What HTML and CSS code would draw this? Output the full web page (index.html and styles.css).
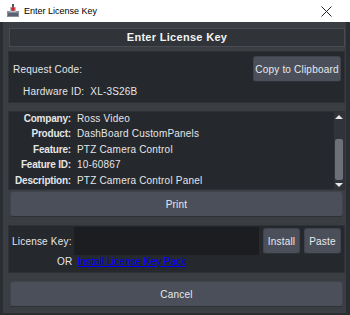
FILE: index.html
```html
<!DOCTYPE html>
<html lang="en">
<head>
    <meta charset="UTF-8">
    <title>Enter License Key</title>
    <link rel="stylesheet" href="styles.css">
</head>
<body>
    <div class="titlebar">
        <svg class="app-icon" width="14" height="14" viewBox="0 0 14 14">
            <rect x="1" y="7" width="12" height="6" fill="#8a8f99"/>
            <rect x="2" y="9" width="10" height="3" fill="#5c6270"/>
            <rect x="4" y="3" width="6" height="5" fill="#b9bec6"/>
            <circle cx="7" cy="5" r="2" fill="#d0262a"/>
            <rect x="6" y="0" width="2" height="3" fill="#555"/>
        </svg>
        <span class="title-text">Enter License Key</span>
        <svg class="close" width="11" height="11" viewBox="0 0 11 11">
            <path d="M0.5 0.5 L10.5 10.5 M10.5 0.5 L0.5 10.5" stroke="#222" stroke-width="1"/>
        </svg>
    </div>

    <div class="window">
        <div class="header">Enter License Key</div>

        <div class="panel request">
            <div class="row">
                <span>Request Code:</span>
                <button class="btn copy">Copy to Clipboard</button>
            </div>
            <div class="hw">Hardware ID:&nbsp; XL-3S26B</div>
        </div>

        <div class="panel info">
            <div class="info-grid">
                <span class="k">Company:</span><span>Ross Video</span>
                <span class="k">Product:</span><span>DashBoard CustomPanels</span>
                <span class="k">Feature:</span><span>PTZ Camera Control</span>
                <span class="k">Feature ID:</span><span>10-60867</span>
                <span class="k">Description:</span><span>PTZ Camera Control Panel</span>
            </div>
            <div class="scrollbar">
                <div class="arrow up"></div>
                <div class="track"><div class="thumb"></div></div>
                <div class="arrow down"></div>
            </div>
        </div>

        <button class="btn wide print">Print</button>

        <div class="panel key">
            <div class="key-row">
                <span class="key-label">License Key:</span>
                <div class="key-input"></div>
                <button class="btn small">Install</button>
                <button class="btn small">Paste</button>
            </div>
            <div class="or-row">
                <span class="or">OR</span>
                <a href="#" class="link">Install License Key Pack</a>
            </div>
        </div>

        <button class="btn wide cancel">Cancel</button>
    </div>
</body>
</html>
```

FILE: styles.css
```css
body {
    margin: 0;
    width: 350px;
    height: 315px;
    overflow: hidden;
    background: #ffffff;
    font-family: "Liberation Sans", Arial, sans-serif;
    font-size: 10px;
    letter-spacing: 0.2px;
    white-space: nowrap;
    color: #e4e6ea;
}
.titlebar {
    height: 22px;
    display: flex;
    align-items: center;
    background: #ffffff;
    color: #000;
    font-size: 9px;
    letter-spacing: 0;
    padding-left: 6px;
}
.app-icon {
    margin-right: 4px;
}
.title-text {
    flex: 1;
}
.close {
    margin-right: 18px;
}
.window {
    height: 293px;
    box-sizing: border-box;
    background: #3a3d42;
    border-left: 3px solid #2a2d31;
    border-right: 4px solid #2a2d31;
    border-bottom: 2px solid #2a2d31;
    padding: 6px 1px 0 5px;
    display: flex;
    flex-direction: column;
}
.header {
    height: 17px;
    margin-left: 1px;
    background: #303338;
    border: 1px solid #484b51;
    text-align: center;
    font-weight: bold;
    font-size: 11px;
    line-height: 17px;
    color: #f2f3f5;
    letter-spacing: 0.3px;
}
.panel {
    background: #25282c;
    border: 1px solid #2e3135;
}
.request {
    margin-top: 4px;
    height: 46px;
    padding: 4px 3px 0 4px;
}
.row {
    display: flex;
    justify-content: space-between;
    align-items: center;
}
.hw {
    margin-top: 4px;
    padding-left: 10px;
}
.btn {
    font-family: "Liberation Sans", Arial, sans-serif;
    font-size: 10px;
    letter-spacing: 0.2px;
    color: #e8eaee;
    background: #4a4f59;
    border: 1px solid #3f434b;
    border-bottom-color: #2e3136;
    border-radius: 3px;
    padding: 0;
    white-space: nowrap;
}
.copy {
    width: 88px;
    height: 26px;
}
.info {
    margin-top: 8px;
    height: 79px;
    box-sizing: border-box;
    display: flex;
    justify-content: space-between;
}
.info-grid {
    display: grid;
    grid-template-columns: auto auto;
    column-gap: 6px;
    row-gap: 3px;
    align-content: start;
    justify-content: start;
    padding: 1px 0 0 6px;
    line-height: 12.4px;
}
.k {
    text-align: right;
    font-weight: bold;
    letter-spacing: -0.2px;
}
.scrollbar {
    width: 10px;
    background: #30333a;
    display: flex;
    flex-direction: column;
    align-items: center;
    padding: 3px 0 2px;
}
.arrow {
    width: 0;
    height: 0;
    border-left: 4px solid transparent;
    border-right: 4px solid transparent;
}
.up {
    border-bottom: 4px solid #e8e8e8;
}
.down {
    border-top: 4px solid #e8e8e8;
}
.track {
    flex: 1;
    width: 8px;
    padding: 20px 0 3px;
    display: flex;
}
.thumb {
    flex: 1;
    background: #6c7079;
    border-radius: 2px;
}
.wide {
    height: 26px;
    margin-left: 2px;
    margin-right: 2px;
}
.print {
    margin-top: 1px;
}
.key {
    margin-top: 8px;
    height: 48px;
    box-sizing: border-box;
    padding: 1px 3px 0 3px;
}
.key-row {
    display: flex;
    align-items: center;
    gap: 4px;
}
.key-label {
    width: 58px;
}
.key-input {
    flex: 1;
    height: 28px;
    background: #1b1d20;
}
.small {
    width: 37px;
    height: 26px;
}
.or-row {
    display: flex;
    gap: 5px;
    padding-left: 45px;
    margin-top: 1px;
}
.link {
    color: #0000ff;
    text-decoration: underline;
    letter-spacing: 0;
}
.cancel {
    margin-top: 8px;
}
```
